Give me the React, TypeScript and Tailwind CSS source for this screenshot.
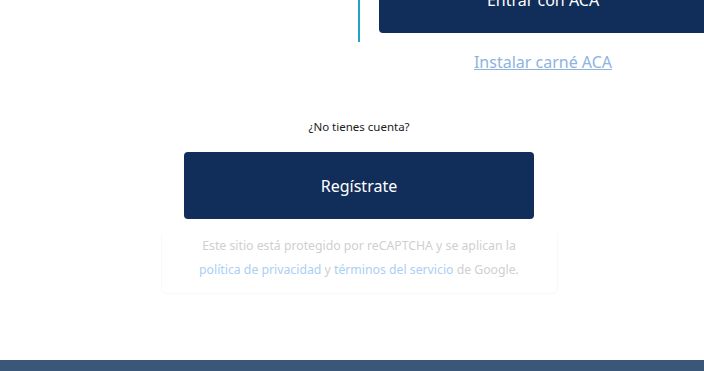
export default function App(): React.JSX.Element {
  return (
    <div className="w-[704px] h-[371px] overflow-hidden bg-white flex flex-col font-['Noto_Sans',sans-serif]">
      {/* top login row, scrolled so only its lower part shows */}
      <div className="flex -mt-[34px] shrink-0">
        <div className="w-[358px] shrink-0" />
        <div className="w-[2px] h-[76px] bg-[#22a3c4] shrink-0" />
        <div className="pl-[19px] w-[347px] shrink-0 flex flex-col items-center">
          <button className="w-[328px] h-[67px] shrink-0 rounded-[4px] bg-[#112d5a] text-white text-[16px]">
            Entrar con ACA
          </button>
          <a href="#" className="mt-[19px] text-[16px] leading-[20px] text-[#8db3df] underline">
            Instalar carné ACA
          </a>
        </div>
      </div>

      <div className="flex flex-col items-center pl-[14px]">
        <p className="mt-[47px] text-[11.5px] leading-[16px] text-[#1b1b1b]">¿No tienes cuenta?</p>
        <button className="mt-[17px] w-[350px] h-[67px] rounded-[4px] bg-[#112d5a] text-white text-[16px]">
          Regístrate
        </button>
        <div className="mt-[15px] w-[397px] pb-[11px] rounded-b-[6px] border border-t-0 border-[#f7f8f9] text-center text-[12.25px] leading-[24px] text-[#cfcfcf]">
          <p>Este sitio está protegido por reCAPTCHA y se aplican la</p>
          <p>
            <a href="#" className="text-[#a9cff4]">política de privacidad</a> y{' '}
            <a href="#" className="text-[#a9cff4]">términos del servicio</a> de Google.
          </p>
        </div>
      </div>

      <div className="mt-auto h-[11px] bg-[#3a5779]" />
    </div>
  )
}
